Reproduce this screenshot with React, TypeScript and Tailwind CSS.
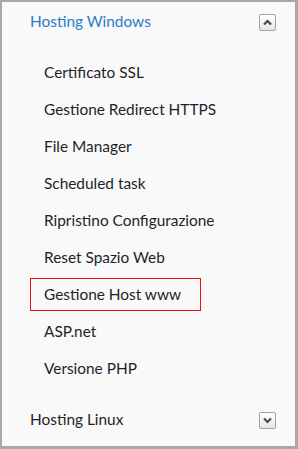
import React from "react";

const items = [
  "Certificato SSL",
  "Gestione Redirect HTTPS",
  "File Manager",
  "Scheduled task",
  "Ripristino Configurazione",
  "Reset Spazio Web",
  "Gestione Host www",
  "ASP.net",
  "Versione PHP",
];

function ToggleBtn({ up }: { up: boolean }) {
  return (
    <span className="flex h-[17px] w-[17px] items-center justify-center rounded-[2px] border border-[#a3a3a3] bg-gradient-to-b from-white to-[#e6e6e6]">
      <svg width="11" height="11" viewBox="0 0 11 11">
        <path
          d={up ? "M2 7.5 L5.5 4 L9 7.5" : "M2 3.5 L5.5 7 L9 3.5"}
          fill="none"
          stroke="#4a4a4a"
          strokeWidth="2.2"
        />
      </svg>
    </span>
  );
}

export default function App() {
  const selected = "Gestione Host www";
  return (
    <div
      className="h-[449px] w-[298px] border-t-2 border-l-2 border-r-[3px] border-b-[3px] border-[#a9a9a9] bg-[#f9f9f9]"
      style={{ fontFamily: "Lato, 'Open Sans', sans-serif" }}
    >
      <div className="flex h-[40px] items-center justify-between pl-[28px] pr-[19px]">
        <span className="whitespace-nowrap text-[15.4px] text-[#2b7bc9]">Hosting Windows</span>
        <ToggleBtn up />
      </div>
      <ul className="pt-[12px]">
        {items.map((item) => (
          <li key={item} className="flex h-[37px] items-center pl-[28px]">
            <div
              className={`flex h-[33px] w-[171px] items-center whitespace-nowrap border pl-[13px] text-[15.4px] text-[#1f1f2b] ${
                item === selected ? "border-[#ee1111]" : "border-transparent"
              }`}
            >
              {item}
            </div>
          </li>
        ))}
      </ul>
      <div className="mt-[13px] flex h-[40px] items-center justify-between pl-[28px] pr-[19px]">
        <span className="whitespace-nowrap text-[15.4px] text-[#1f1f2b]">Hosting Linux</span>
        <ToggleBtn up={false} />
      </div>
    </div>
  );
}
